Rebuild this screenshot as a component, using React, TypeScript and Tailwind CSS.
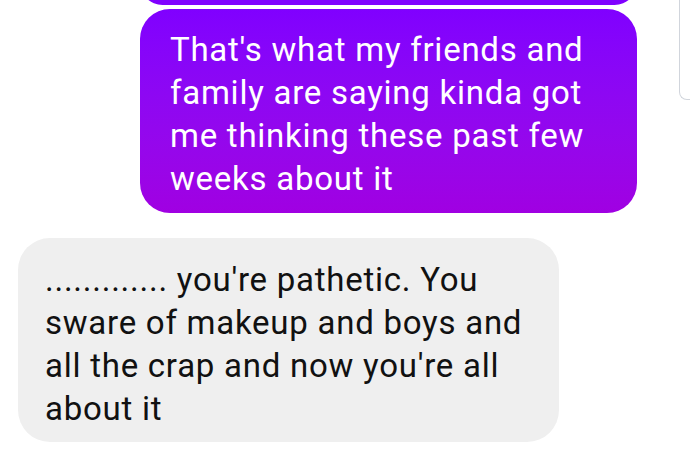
export default function App() {
  const sent = [
    "That's what my friends and",
    "family are saying kinda got",
    "me thinking these past few",
    "weeks about it",
  ];
  const received = [
    "............. you're pathetic. You",
    "sware of makeup and boys and",
    "all the crap and now you're all",
    "about it",
  ];

  return (
    <div className="relative h-[476px] w-[690px] overflow-hidden bg-white font-['Roboto',sans-serif]">
      {/* scrollbar track */}
      <div className="absolute right-0 top-0 h-[100px] w-[11px] rounded-bl-[8px] border-b border-l border-gray-300 bg-white" />

      <div className="flex flex-col">
        {/* previous message, cut off at top */}
        <div className="-mt-[40px] ml-[140px] h-[45px] w-[497px] rounded-[30px] bg-[#8000ff]" />

        <div className="mt-[4px] ml-[140px] w-[497px] rounded-[30px] bg-gradient-to-b from-[#8000ff] to-[#a000e2] pl-[30px] pr-4 pt-[19px] pb-[13px] text-[33px] leading-[43px] tracking-[0.75px] text-white">
          {sent.map((line) => (
            <div key={line} className="whitespace-nowrap">
              {line}
            </div>
          ))}
        </div>

        <div className="mt-[25px] ml-[18px] w-[541px] rounded-[32px] bg-[#efefef] pl-[27px] pr-4 pt-[20px] pb-[12px] text-[33px] leading-[43px] tracking-[0.75px] text-[#111]">
          {received.map((line) => (
            <div key={line} className="whitespace-nowrap">
              {line}
            </div>
          ))}
        </div>
      </div>
    </div>
  );
}
